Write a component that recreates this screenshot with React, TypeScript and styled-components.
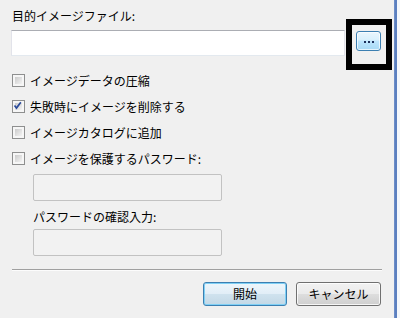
import React from 'react';
import styled, { createGlobalStyle } from 'styled-components';

const GlobalStyle = createGlobalStyle`
  html, body {
    margin: 0;
    padding: 0;
    background: #f0f0f0;
  }
  body {
    font-family: "Noto Sans CJK JP", "Noto Sans", sans-serif;
    font-size: 12px;
    color: #000;
  }
`;

// Options de la boîte de dialogue
type Option = {
  label: string;
  checked?: boolean;
};

const options: Option[] = [
  { label: 'イメージデータの圧縮' },
  { label: '失敗時にイメージを削除する', checked: true },
  { label: 'イメージカタログに追加' },
  { label: 'イメージを保護するパスワード:' },
];

const Window = styled.div`
  display: flex;
  width: 400px;
  height: 318px;
  background: #f0f0f0;
  overflow: hidden;
`;

const Content = styled.div`
  flex: 1;
  display: flex;
  flex-direction: column;
  padding: 8px 0 0 11px;
`;

const Edge = styled.div`
  width: 6px;
  background: linear-gradient(to right, #7d9bd0 0, #5b7fbf 1px, #5b7fbf 3px, #f4f7fb 3px);
`;

const Label = styled.div<{ $indent?: number }>`
  line-height: 16px;
  height: 16px;
  margin-left: ${p => p.$indent ?? 1}px;
  white-space: nowrap;
`;

const FileRow = styled.div`
  display: flex;
  align-items: flex-start;
  gap: 11px;
  margin-top: 6px;
`;

const TextInput = styled.div<{ $width: number }>`
  box-sizing: border-box;
  width: ${p => p.$width}px;
  height: 26px;
  background: #fff;
  border: 1px solid #e2e3ea;
  border-top-color: #abadb3;
  border-bottom-color: #e3e9ef;
`;

const BrowseSlot = styled.div`
  position: relative;
  margin-top: 1px;
`;

const Highlight = styled.div`
  position: absolute;
  left: -10px;
  top: -12px;
  width: 46px;
  height: 51px;
  box-sizing: border-box;
  border: 6px solid #000;
  pointer-events: none;
`;

const BrowseButton = styled.button`
  box-sizing: border-box;
  width: 25px;
  height: 20px;
  padding: 0;
  display: flex;
  align-items: center;
  justify-content: center;
  gap: 2px;
  border: 1px solid #3c7fb1;
  border-radius: 3px;
  background: linear-gradient(to bottom, #eaf6fd 0%, #d9f0fc 45%, #bee6fd 50%, #a7d9f5 100%);
  box-shadow: inset 0 0 0 1px rgba(255, 255, 255, 0.7);
`;

const Dot = styled.span`
  width: 2px;
  height: 2px;
  margin-top: 2px;
  background: #1d2f5a;
`;

const OptionList = styled.div`
  display: flex;
  flex-direction: column;
  margin-top: 11px;
`;

const OptionRow = styled.label`
  display: flex;
  align-items: center;
  gap: 5px;
  height: 26px;
  padding-left: 1px;
  white-space: nowrap;
`;

const Box = styled.span`
  box-sizing: border-box;
  display: flex;
  width: 13px;
  height: 13px;
  padding: 2px;
  border: 1px solid #8e8f8f;
  background: linear-gradient(135deg, #cbcbcb, #f3f3f3) content-box, #f6f6f6;
  svg {
    display: block;
    margin: -3px;
    flex: none;
  }
`;

const DisabledInput = styled.div<{ $top: number }>`
  box-sizing: border-box;
  width: 189px;
  height: 27px;
  margin: ${p => p.$top}px 0 0 22px;
  background: #f2f2f2;
  border: 1px solid #c2c2c2;
  border-radius: 2px;
`;

const SubLabel = styled(Label)`
  margin-top: 8px;
`;

const Separator = styled.div`
  width: 370px;
  margin: 13px 0 0 1px;
  border-top: 1px solid #a0a0a0;
  border-bottom: 1px solid #fcfcfc;
`;

const ButtonRow = styled.div`
  display: flex;
  justify-content: flex-end;
  gap: 9px;
  margin-top: 11px;
  padding-right: 13px;
`;

const DialogButton = styled.button<{ $default?: boolean; $width: number }>`
  box-sizing: border-box;
  width: ${p => p.$width}px;
  height: 24px;
  padding: 0;
  font-family: inherit;
  font-size: 12px;
  line-height: 16px;
  color: #000;
  border-radius: 3px;
  border: 1px solid ${p => (p.$default ? '#3c7fb1' : '#707070')};
  background: ${p =>
    p.$default
      ? 'linear-gradient(to bottom, #eef6fb 0%, #e2eef7 48%, #cfe2ee 52%, #c3d8e6 100%)'
      : 'linear-gradient(to bottom, #f2f2f2 0%, #ebebeb 48%, #dddddd 52%, #cfcfcf 100%)'};
  box-shadow: inset 0 0 0 1px ${p => (p.$default ? '#7fd0f5' : 'rgba(255,255,255,0.8)')};
`;

const CheckMark = () => (
  <svg width="11" height="11" viewBox="0 0 11 11">
    <path d="M2.5 5.5 L4.5 8 L8.8 2.3" fill="none" stroke="#2a4a9a" strokeWidth="1.7" />
  </svg>
);

const App: React.FC = () => (
  <>
    <GlobalStyle />
    <Window>
      <Content>
        <Label>目的イメージファイル:</Label>
        <FileRow>
          <TextInput $width={334} />
          <BrowseSlot>
            <BrowseButton>
              <Dot />
              <Dot />
              <Dot />
            </BrowseButton>
            <Highlight />
          </BrowseSlot>
        </FileRow>
        <OptionList>
          {options.map(opt => (
            <OptionRow key={opt.label}>
              <Box>{opt.checked && <CheckMark />}</Box>
              {opt.label}
            </OptionRow>
          ))}
        </OptionList>
        <DisabledInput $top={3} />
        <SubLabel $indent={22}>パスワードの確認入力:</SubLabel>
        <DisabledInput $top={4} />
        <Separator />
        <ButtonRow>
          <DialogButton $default $width={84}>開始</DialogButton>
          <DialogButton $width={85}>キャンセル</DialogButton>
        </ButtonRow>
      </Content>
      <Edge />
    </Window>
  </>
);

export default App;
